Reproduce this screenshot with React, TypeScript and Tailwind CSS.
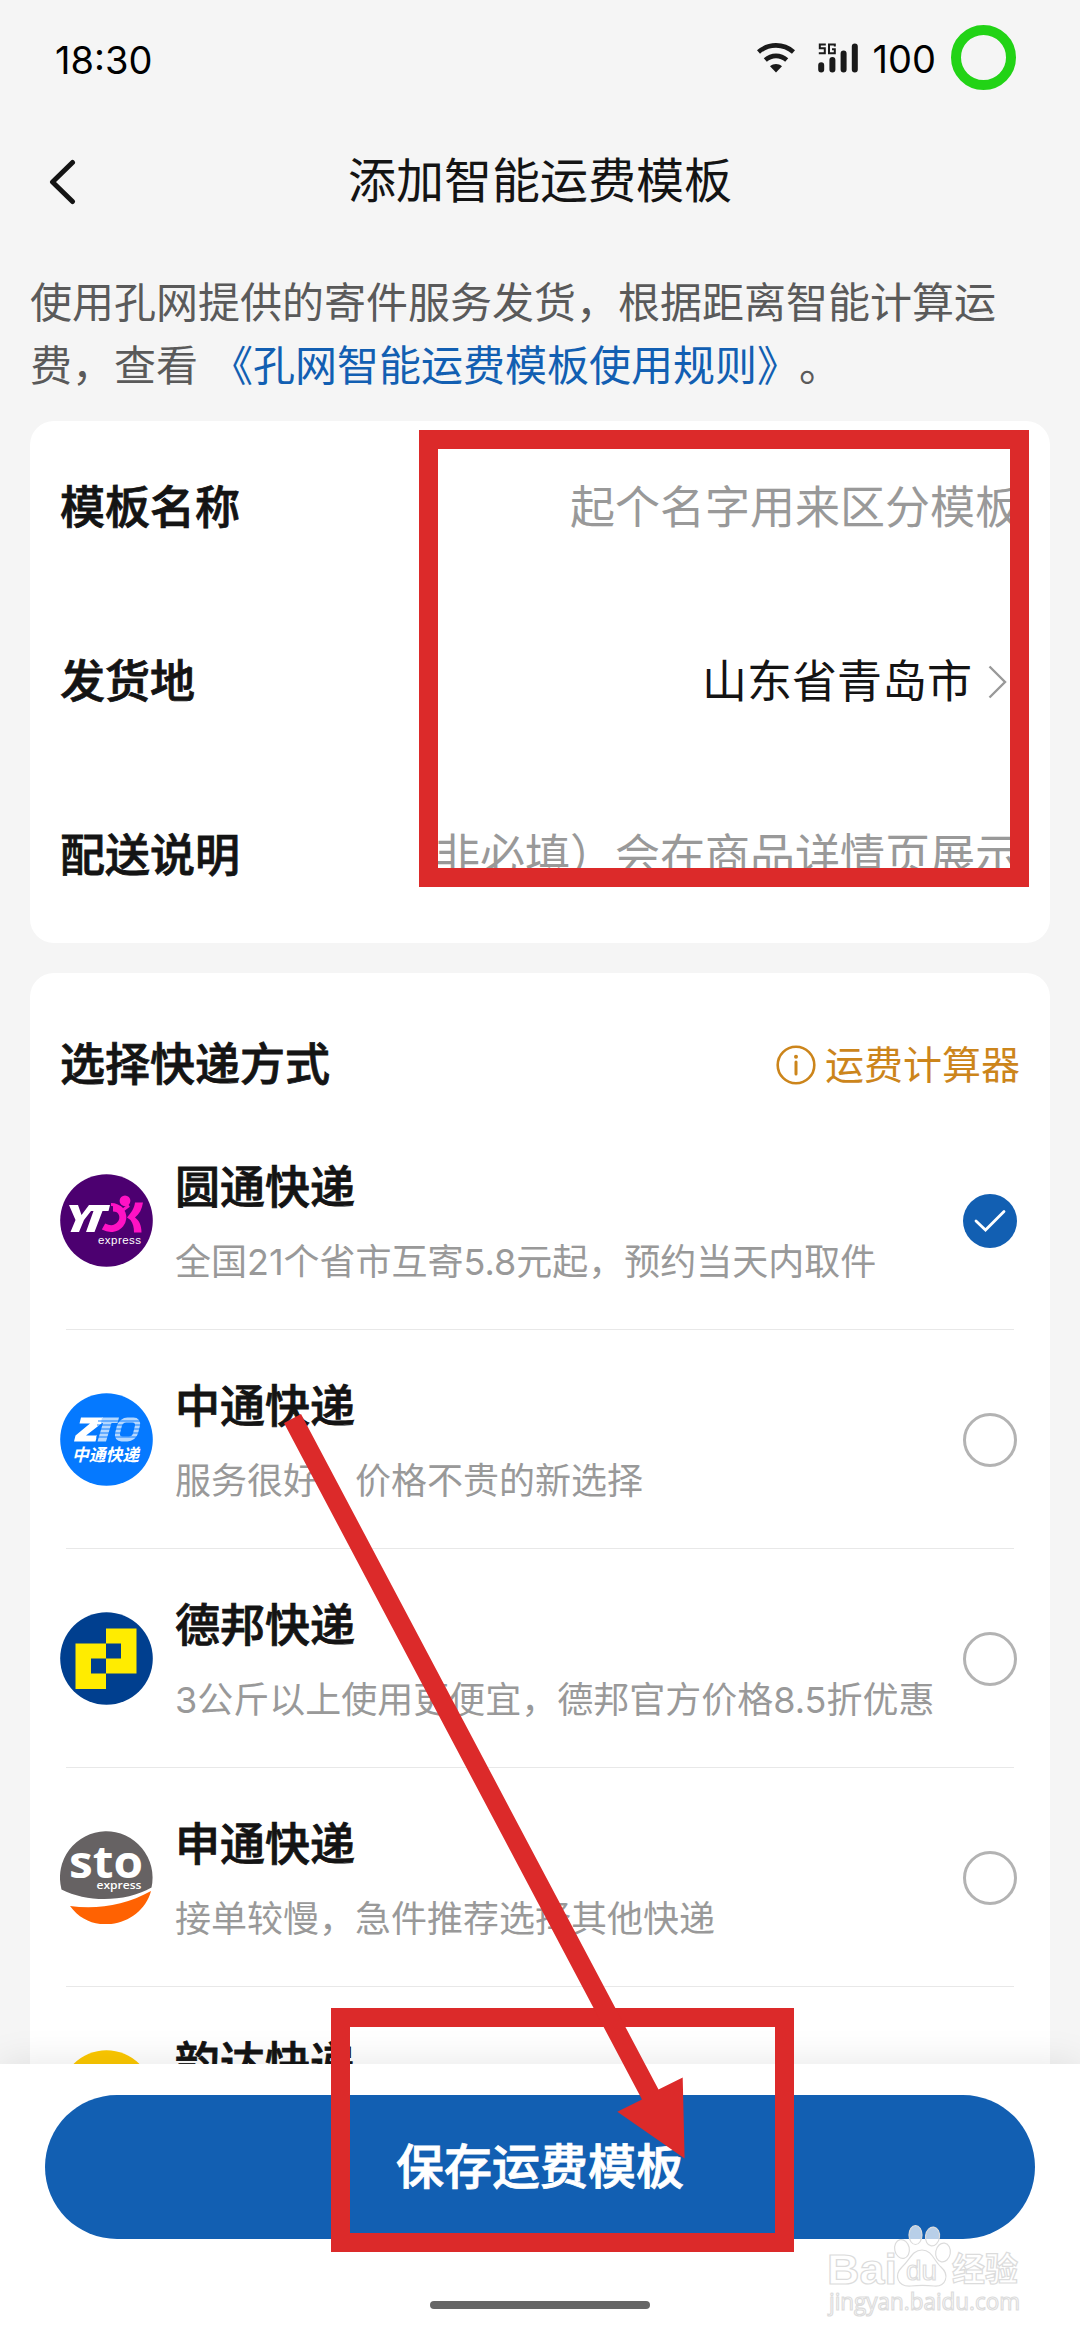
import type { ReactNode } from 'react';

interface Courier {
  id: string;
  name: string;
  desc: string;
  logo: ReactNode;
}

function WifiIcon() {
  return (
    <svg width="38" height="30" viewBox="0 0 38 30" fill="none" stroke="#1a1a1a" strokeWidth="4.6">
      <path d="M1.5 9C11.5 0.2 26.5 0.2 36.5 9" />
      <path d="M8.3 17C14.5 11.5 23.5 11.5 29.7 17" />
      <path d="M19 29.5L13 23.2C16.5 20.2 21.5 20.2 25 23.2Z" fill="#1a1a1a" stroke="none" />
    </svg>
  );
}

function SignalIcon() {
  return (
    <svg width="40" height="30" viewBox="0 0 40 30" stroke="#1a1a1a" fill="none">
      <path d="M3.2 22.3V26.5M14.4 17V26.5M25.6 10.5V26.5M36.8 3.5V26.5" strokeWidth="6" strokeLinecap="round" />
      <path d="M7.8 1.5H1.8V5.2H6.8V10.3H0.8" strokeWidth="2" />
      <path d="M16.8 3.5V1.5H11V10.3H16.8V6.3H14" strokeWidth="2" />
    </svg>
  );
}

function YtoLogo() {
  return (
    <svg width="93" height="93" viewBox="0 0 93 93">
      <circle cx="46.5" cy="46.5" r="46.3" fill="#4c0070" />
      <path d="M51 30.5C57 30.5 60 33 63 36L69 31.500" fill="none" stroke="#ff12c4" strokeWidth="3" />
      <path d="M53 34C63 34 65 44 60.500 50C56 55.500 49 55.500 43.500 52.500" fill="none" stroke="#ff12c4" strokeWidth="7" />
      <path d="M9 31H18L21.5 41L29 31H50L48.5 37H42.5L34.5 58H26L33.5 37H31L24 46L19 58H10.5L15.5 46Z" fill="#fff" />
      <circle cx="65" cy="26.8" r="5.4" fill="#ff12c4" />
      <path d="M83 28.500H75C74.500 34 71 39 67 43.500L70.500 46C73 49.500 74 53 74 58.500H81.500C81.500 51 79 46.500 75 43.500C79.500 40 82 35 83 28.500Z" fill="#ff12c4" />
      <text x="38" y="69.5" fontSize="11.5" textLength="43" fill="#fff" fontFamily="Liberation Sans, sans-serif">express</text>
    </svg>
  );
}

function ZtoLogo() {
  return (
    <svg width="93" height="93" viewBox="0 0 93 93">
      <circle cx="46.5" cy="46.5" r="46.3" fill="#0579ff" />
      <path d="M21 24.5H43L41.5 30.5L26 42.5H37L35.5 48.5H14L15.5 42.5L30 30.5H19.5Z" fill="#fff" />
      <path d="M42 24.5H59L57.5 30H51.5L46 48.5H37.5L43 30H41Z" fill="#b5d8ff" />
      <rect x="-9" y="-9.5" width="18" height="19" rx="6" transform="translate(67.5 36.5) skewX(-14)" fill="none" stroke="#b5d8ff" strokeWidth="5" />
      <path d="M38 28H80M37 32H80M36 36H80M35 40H80M36 44H80" stroke="#0579ff" strokeWidth="0.9" />
      <text x="12" y="67.5" fontSize="17" fontWeight="700" fontStyle="italic" textLength="67" lengthAdjust="spacingAndGlyphs" fill="#fff" fontFamily="Noto Sans CJK SC, sans-serif">中通快递</text>
    </svg>
  );
}

function DebangLogo() {
  return (
    <svg width="93" height="93" viewBox="0 0 93 93">
      <circle cx="46.5" cy="46.5" r="46.3" fill="#003f8f" />
      <path d="M15.5 31.5H46V46.5H31V61.5H46V77H15.5Z" fill="#ffec00" />
      <path d="M46 16.5H76.5V61.5H46V46.5H61V31.5H46Z" fill="#ffec00" />
    </svg>
  );
}

function StoLogo() {
  return (
    <svg width="93" height="93" viewBox="0 0 93 93">
      <path d="M1.5 58.5A46.3 46.3 0 1 1 91.5 56.5C66 71 28 72 1.5 58.5Z" fill="#666263" />
      <path d="M10 75C37 79 66 74 91 60C82 94 33 107 10 75Z" fill="#ff6202" />
      <text x="9" y="47" fontSize="45" fontWeight="700" textLength="74" lengthAdjust="spacingAndGlyphs" fill="#fff" fontFamily="Open Sans, sans-serif">sto</text>
      <text x="36.5" y="58" fontSize="11" fontWeight="600" textLength="45" lengthAdjust="spacingAndGlyphs" fill="#fff" fontFamily="Open Sans, sans-serif">express</text>
    </svg>
  );
}

function YundaLogo() {
  return (
    <svg width="93" height="93" viewBox="0 0 93 93">
      <circle cx="46.5" cy="46.5" r="46.3" fill="#fcc800" />
    </svg>
  );
}

const COURIERS: Courier[] = [
  { id: 'yto', name: '圆通快递', desc: '全国21个省市互寄5.8元起，预约当天内取件', logo: <YtoLogo /> },
  { id: 'zto', name: '中通快递', desc: '服务很好，价格不贵的新选择', logo: <ZtoLogo /> },
  { id: 'debang', name: '德邦快递', desc: '3公斤以上使用更便宜，德邦官方价格8.5折优惠', logo: <DebangLogo /> },
  { id: 'sto', name: '申通快递', desc: '接单较慢，急件推荐选择其他快递', logo: <StoLogo /> },
  { id: 'yunda', name: '韵达快递', desc: '', logo: <YundaLogo /> },
];

function FormRow({ label, children }: { label: string; children: ReactNode }) {
  return (
    <div className="flex h-[174px] items-center justify-between">
      <span className="shrink-0 font-medium [-webkit-text-stroke:0.8px]">{label}</span>
      {children}
    </div>
  );
}

function Radio({ checked }: { checked: boolean }) {
  if (!checked) return <span className="size-[54px] shrink-0 rounded-full border-[3px] border-[#b3b3b3]" />;
  return (
    <span className="flex size-[54px] shrink-0 items-center justify-center rounded-full bg-[#125fb2]">
      <svg width="54" height="54" viewBox="0 0 54 54" fill="none" stroke="#fff" strokeWidth="2.8" strokeLinecap="round">
        <path d="M13 27L22.5 36L41 17.5" />
      </svg>
    </span>
  );
}

function CourierRow({ courier, checked }: { courier: Courier; checked: boolean }) {
  return (
    <div className="flex h-[219px] items-center pr-[3px]">
      {courier.logo}
      <div className="ml-[22px] flex h-full flex-1 flex-col pt-[44px]">
        <div className="h-[66px] text-[45px] leading-[66px] font-medium [-webkit-text-stroke:0.8px]">{courier.name}</div>
        <div className="mt-[14px] h-[54px] text-[36px] leading-[54px] text-[#999]">{courier.desc}</div>
      </div>
      <Radio checked={checked} />
    </div>
  );
}

function Watermark() {
  return (
    <svg className="absolute top-[2220px] left-[820px]" width="220" height="110" viewBox="0 0 220 110" fill="#fff" stroke="#dcdcdc" strokeWidth="1.2">
      <text x="7" y="64" fontSize="43" fontWeight="700" textLength="70" lengthAdjust="spacingAndGlyphs" fontFamily="Liberation Sans, sans-serif">Bai</text>
      <g fillOpacity="0.7">
        <ellipse cx="82" cy="29" rx="7.3" ry="9.5" transform="rotate(-12 82 29)" />
        <ellipse cx="95.5" cy="15" rx="6.5" ry="9.5" />
        <ellipse cx="112.5" cy="16.5" rx="7" ry="9.5" transform="rotate(8 112.5 16.5)" />
        <ellipse cx="123" cy="32.5" rx="7.3" ry="9.5" transform="rotate(10 123 32.5)" />
      </g>
      <path d="M102 30C112 30 114 41 121 47C130 55 126 67 114 66C106 65 99 65 91 66C77 67 74 55 82 47C90 40 92 30 102 30Z" />
      <text x="86" y="60" fontSize="28" textLength="31" lengthAdjust="spacingAndGlyphs" fontFamily="Liberation Sans, sans-serif">du</text>
      <text x="132" y="61" fontSize="33" fontWeight="700" fontFamily="Noto Sans CJK SC, sans-serif">经验</text>
      <text x="9" y="90" fontSize="24" textLength="191" lengthAdjust="spacingAndGlyphs" fontFamily="Open Sans, sans-serif">jingyan.baidu.com</text>
    </svg>
  );
}

export default function App() {
  return (
    <div className="relative flex h-[2340px] w-[1080px] flex-col overflow-hidden bg-[#f5f5f5] font-[Inter,'Noto_Sans_CJK_SC',sans-serif] text-[#141414] [text-spacing-trim:space-all]">
      {/* Status bar */}
      <div className="flex h-[115px] shrink-0 items-center justify-between pr-[64px] pl-[55px] text-[38px] text-black">
        <span className="pt-1.5">18:30</span>
        <div className="flex items-center">
          <WifiIcon />
          <span className="ml-[23px]"><SignalIcon /></span>
          <span className="ml-[15px] pt-1">100</span>
          <span className="ml-[15px] size-[65px] rounded-full border-[10px] border-[#22d316]" />
        </div>
      </div>

      {/* Title bar */}
      <div className="flex h-[132px] shrink-0 items-center justify-between px-[48px]">
        <svg width="28" height="48" viewBox="0 0 28 48" fill="none" stroke="#141414" strokeWidth="5" strokeLinecap="round" strokeLinejoin="round">
          <path d="M24.5 5.5L4.500 25L24.5 44.5" />
        </svg>
        <h1 className="text-[48px] leading-[72px]">添加智能运费模板</h1>
        <span className="w-[28px]" />
      </div>

      <p className="mt-[24px] h-[126px] shrink-0 px-[30px] text-[42px] leading-[63px] text-[#5a5a5a]">
        使用孔网提供的寄件服务发货，根据距离智能计算运
        <br />
        费，查看<a className="ml-[13px] text-[#125fb2]">《孔网智能运费模板使用规则》</a>。
      </p>

      {/* Template form */}
      <section className="mx-[30px] mt-[24px] shrink-0 rounded-[24px] bg-white px-[30px] text-[45px] leading-[66px]">
        <FormRow label="模板名称">
          <span className="text-[#999]">起个名字用来区分模板</span>
        </FormRow>
        <FormRow label="发货地">
          <span className="flex items-center gap-[16px] pr-[13px]">
            山东省青岛市
            <svg width="19" height="34" viewBox="0 0 19 34" fill="none" stroke="#999" strokeWidth="2.4">
              <path d="M1.5 1.5L17 17L1.5 32.5" />
            </svg>
          </span>
        </FormRow>
        <FormRow label="配送说明">
          <span className="flex w-[640px] justify-end overflow-hidden whitespace-nowrap text-[#999]">（非必填）会在商品详情页展示</span>
        </FormRow>
      </section>

      {/* Courier list */}
      <section className="mx-[30px] mt-[30px] min-h-0 flex-1 overflow-hidden rounded-t-[24px] bg-white px-[30px]">
        <div className="flex h-[138px] items-center justify-between pt-[46px]">
          <h2 className="text-[45px] leading-[66px] font-medium [-webkit-text-stroke:0.8px]">选择快递方式</h2>
          <span className="flex items-center gap-[9px] text-[39px] leading-[58px] text-[#cc851b]">
            <svg width="40" height="40" viewBox="0 0 40 40" fill="none" stroke="currentColor">
              <circle cx="20" cy="20" r="18.3" strokeWidth="2.6" />
              <path d="M20 17V29" strokeWidth="3" strokeLinecap="round" />
              <circle cx="20" cy="11.8" r="2" fill="currentColor" stroke="none" />
            </svg>
            运费计算器
          </span>
        </div>
        {COURIERS.map((c, i) => (
          <div key={c.id}>
            {i > 0 && <div className="mx-[6px] -mt-px h-px bg-[#e8e8e8]" />}
            <CourierRow courier={c} checked={c.id === 'yto'} />
          </div>
        ))}
      </section>

      {/* Footer */}
      <footer className="flex h-[276px] shrink-0 flex-col items-center bg-white px-[45px] pt-[31px] shadow-[0_0_36px_rgba(0,0,0,0.1)]">
        <button className="h-[144px] w-full rounded-full bg-[#125fb2] text-[48px] font-medium text-white [-webkit-text-stroke:0.8px]">保存运费模板</button>
        <span className="mt-[62px] h-[8px] w-[220px] rounded-full bg-[#666]" />
      </footer>

      {/* Annotations over the page */}
      <div className="absolute top-[430px] left-[419px] h-[457px] w-[610px] border-[19.5px] border-[#dc2a2a]" />
      <div className="absolute top-[2008px] left-[331px] h-[244px] w-[463px] border-[19.5px] border-[#dc2a2a]" />
      <svg className="absolute top-[1400px] left-[270px]" width="430" height="770" viewBox="270 1400 430 770" fill="#dc2a2a">
        <path d="M284 1423L301 1414L658.5 2089.5L682.7 2077.5L684.6 2158.5L617.3 2111.8L642 2099.5Z" />
      </svg>
      <Watermark />
    </div>
  );
}
